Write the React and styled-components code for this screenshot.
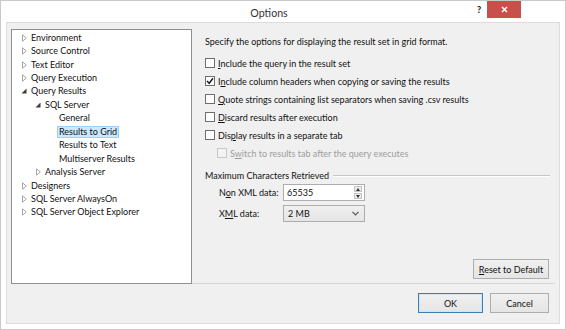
import React from 'react';
import styled, { createGlobalStyle } from 'styled-components';

const Global = createGlobalStyle`
  html, body { margin: 0; padding: 0; background: #fff; }
  body { font-family: Lato, "Noto Sans", sans-serif; font-size: 9px; color: #111; }
`;

const Window = styled.div`
  width: 566px;
  height: 330px;
  box-sizing: border-box;
  border: 1px solid #c9c9c9;
  background: #fff;
  display: flex;
  flex-direction: column;
  white-space: nowrap;
`;

const TitleBar = styled.div`
  height: 21px;
  display: flex;
  align-items: center;
`;

const Title = styled.div`
  flex: 1;
  text-align: center;
  font-size: 10.6px;
  color: #333;
  padding-top: 2px;
`;

const Help = styled.div`
  font-size: 9px;
  font-weight: 900;
  color: #222;
  width: 8px;
  margin-right: 2px;
  margin-bottom: 4px;
`;

const Close = styled.div`
  width: 34px;
  height: 17px;
  margin-right: 44px;
  align-self: flex-start;
  background: #c7504a;
  display: flex;
  align-items: center;
  justify-content: center;
`;

const Body = styled.div`
  flex: 1;
  margin: 0 5px 5px 5px;
  border: 1px solid #dcdcdc;
  background: #f0f0f0;
  display: flex;
  flex-direction: column;
`;

const Main = styled.div`
  display: flex;
  padding: 6px 4px 0 4px;
  height: 255px;
`;

const Tree = styled.div`
  width: 181px;
  box-sizing: border-box;
  border: 1px solid #8e8f8f;
  background: #fff;
  padding-top: 1px;
`;

const Node = styled.div`
  height: 13.45px;
  display: flex;
  align-items: center;
  padding-left: ${p => 7 + p.level * 14}px;
`;

const Arrow = styled.span`
  width: 10px;
  height: 10px;
  flex: none;
  display: inline-flex;
  align-items: center;
  justify-content: center;
  margin-right: 2px;
`;

const Label = styled.span`
  padding: 0 1px;
  margin-left: -2px;
  border: 1px solid ${p => (p.selected ? '#99d1ff' : 'transparent')};
  background: ${p => (p.selected ? '#cce8ff' : 'transparent')};
  line-height: 10px;
`;

const Pane = styled.div`
  flex: 1;
  border-bottom: 1px solid #d5d5d5;
  padding: 6px 0 0 13px;
  display: flex;
  flex-direction: column;
`;

const Intro = styled.div`
  line-height: 13px;
  margin-bottom: 6px;
`;

const CheckRow = styled.div`
  display: flex;
  align-items: center;
  height: 18px;
  padding-left: ${p => (p.indent ? 12 : 0)}px;
  color: ${p => (p.disabled ? '#9d9d9d' : '#111')};
`;

const Box = styled.span`
  width: 8px;
  height: 8px;
  flex: none;
  border: 1px solid ${p => (p.disabled ? '#c8c8c8' : '#6f6f6f')};
  background: ${p => (p.disabled ? '#f3f3f3' : '#fff')};
  margin-right: 3px;
  display: inline-flex;
  align-items: center;
  justify-content: center;
`;

const Group = styled.div`
  margin-top: 7px;
  height: 13px;
  display: flex;
  align-items: center;
  gap: 4px;
  padding-right: 5px;
`;

const GroupLine = styled.div`
  flex: 1;
  height: 1px;
  background: #c6c6c6;
  border-bottom: 1px solid #fff;
`;

const Field = styled.div`
  display: flex;
  align-items: center;
  padding-left: 14px;
  margin-top: ${p => p.gap}px;
`;

const FieldLabel = styled.span`
  width: 64px;
  flex: none;
`;

const Spin = styled.div`
  width: 82px;
  height: 17px;
  box-sizing: border-box;
  border: 1px solid #abadb3;
  background: #fff;
  display: flex;
  align-items: center;
  padding-left: 3px;
`;

const SpinText = styled.span`
  flex: 1;
`;

const SpinBtns = styled.div`
  width: 8px;
  height: 13px;
  margin-right: 2px;
  display: flex;
  flex-direction: column;
  gap: 1px;
`;

const SpinBtn = styled.div`
  flex: 1;
  background: #ececec;
  border: 1px solid #c4c4c4;
  display: flex;
  align-items: center;
  justify-content: center;
`;

const Select = styled.div`
  width: 82px;
  height: 17px;
  box-sizing: border-box;
  border: 1px solid #adadad;
  background: linear-gradient(#f0f0f0, #e5e5e5);
  display: flex;
  align-items: center;
  padding: 0 5px 0 4px;
  justify-content: space-between;
`;

const Spacer = styled.div`
  flex: 1;
`;

const ResetRow = styled.div`
  display: flex;
  justify-content: flex-end;
  padding: 0 6px 4px 0;
`;

const Button = styled.div`
  width: ${p => p.w}px;
  height: 20px;
  box-sizing: border-box;
  border: 1px solid ${p => (p.primary ? '#3c7fb1' : '#adadad')};
  box-shadow: ${p => (p.primary ? 'inset 0 0 0 1px #cfe6f7' : 'none')};
  background: linear-gradient(#f0f0f0, #e5e5e5);
  display: flex;
  align-items: center;
  justify-content: center;
`;

const Footer = styled.div`
  display: flex;
  justify-content: flex-end;
  gap: 7px;
  padding: 9px 10px 0 0;
`;

const U = styled.span`
  text-decoration: underline;
  text-underline-offset: 1px;
`;

const Open = () => (
  <svg width="5" height="8" viewBox="0 0 5 8">
    <path d="M0.5 0.8 L4.3 4 L0.5 7.2 Z" fill="none" stroke="#a6a6a6" />
  </svg>
);

const Expanded = () => (
  <svg width="6" height="6" viewBox="0 0 6 6">
    <path d="M5.5 0.5 L5.5 5.5 L0.5 5.5 Z" fill="#3c3c3c" />
  </svg>
);

const Check = () => (
  <svg width="8" height="8" viewBox="0 0 8 8">
    <path d="M1 4 L3.2 6.3 L7 1.2" fill="none" stroke="#1e1e1e" strokeWidth="1.5" />
  </svg>
);

const nodes = [
  { t: 'Environment', l: 0, a: 'c' },
  { t: 'Source Control', l: 0, a: 'c' },
  { t: 'Text Editor', l: 0, a: 'c' },
  { t: 'Query Execution', l: 0, a: 'c' },
  { t: 'Query Results', l: 0, a: 'e' },
  { t: 'SQL Server', l: 1, a: 'e' },
  { t: 'General', l: 2 },
  { t: 'Results to Grid', l: 2, sel: true },
  { t: 'Results to Text', l: 2 },
  { t: 'Multiserver Results', l: 2 },
  { t: 'Analysis Server', l: 1, a: 'c' },
  { t: 'Designers', l: 0, a: 'c' },
  { t: 'SQL Server AlwaysOn', l: 0, a: 'c' },
  { t: 'SQL Server Object Explorer', l: 0, a: 'c' },
];

export default function App() {
  return (
    <>
      <Global />
      <Window>
        <TitleBar>
          <div style={{ width: 60 }} />
          <Title>Options</Title>
          <Help>?</Help>
          <Close>
            <svg width="7" height="7" viewBox="0 0 7 7">
              <path d="M1 1 L6 6 M6 1 L1 6" stroke="#fff" strokeWidth="1.5" />
            </svg>
          </Close>
        </TitleBar>
        <Body>
          <Main>
            <Tree>
              {nodes.map((n, i) => (
                <Node key={i} level={n.l}>
                  <Arrow>{n.a === 'c' ? <Open /> : n.a === 'e' ? <Expanded /> : null}</Arrow>
                  <Label selected={n.sel}>{n.t}</Label>
                </Node>
              ))}
            </Tree>
            <Pane>
              <Intro>Specify the options for displaying the result set in grid format.</Intro>
              <CheckRow><Box /><span><U>I</U>nclude the query in the result set</span></CheckRow>
              <CheckRow><Box><Check /></Box><span>I<U>n</U>clude column headers when copying or saving the results</span></CheckRow>
              <CheckRow><Box /><span><U>Q</U>uote strings containing list separators when saving .csv results</span></CheckRow>
              <CheckRow><Box /><span><U>D</U>iscard results after execution</span></CheckRow>
              <CheckRow><Box /><span>Dis<U>p</U>lay results in a separate tab</span></CheckRow>
              <CheckRow indent disabled><Box disabled /><span>S<U>w</U>itch to results tab after the query executes</span></CheckRow>
              <Group>Maximum Characters Retrieved<GroupLine /></Group>
              <Field gap={2}>
                <FieldLabel>N<U>o</U>n XML data:</FieldLabel>
                <Spin>
                  <SpinText>65535</SpinText>
                  <SpinBtns>
                    <SpinBtn>
                      <svg width="4" height="3" viewBox="0 0 4 3"><path d="M0 3 L2 0 L4 3 Z" fill="#333" /></svg>
                    </SpinBtn>
                    <SpinBtn>
                      <svg width="4" height="3" viewBox="0 0 4 3"><path d="M0 0 L2 3 L4 0 Z" fill="#333" /></svg>
                    </SpinBtn>
                  </SpinBtns>
                </Spin>
              </Field>
              <Field gap={4}>
                <FieldLabel>X<U>M</U>L data:</FieldLabel>
                <Select>
                  <span>2 MB</span>
                  <svg width="7" height="5" viewBox="0 0 7 5"><path d="M0.5 0.8 L3.5 3.8 L6.5 0.8" fill="none" stroke="#555" strokeWidth="1.2" /></svg>
                </Select>
              </Field>
              <Spacer />
              <ResetRow>
                <Button w={76}><span><U>R</U>eset to Default</span></Button>
              </ResetRow>
            </Pane>
          </Main>
          <Footer>
            <Button w={65} primary>OK</Button>
            <Button w={59}>Cancel</Button>
          </Footer>
        </Body>
      </Window>
    </>
  );
}
